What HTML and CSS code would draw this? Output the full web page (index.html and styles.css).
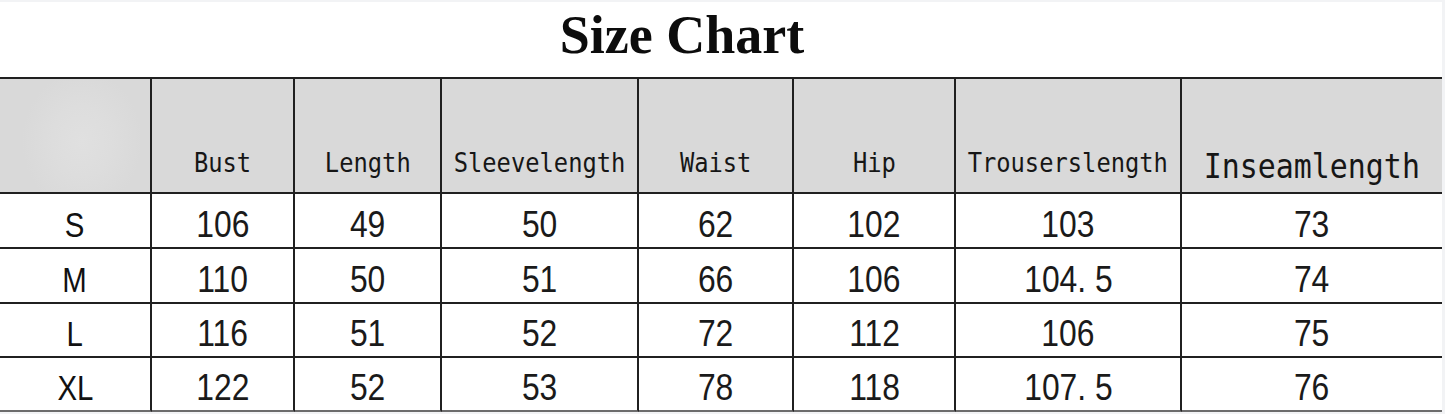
FILE: index.html
```html
<!DOCTYPE html>
<html>
<head>
<meta charset="utf-8">
<link rel="stylesheet" href="styles.css">
</head>
<body>
<div class="sheet">
  <div class="title">Size Chart</div>
  <div class="chart">
    <div class="cell head blank"></div>
    <div class="cell head"><span class="hl">Bust</span></div>
    <div class="cell head"><span class="hl">Length</span></div>
    <div class="cell head"><span class="hl">Sleevelength</span></div>
    <div class="cell head"><span class="hl">Waist</span></div>
    <div class="cell head"><span class="hl">Hip</span></div>
    <div class="cell head"><span class="hl">Trouserslength</span></div>
    <div class="cell head last"><span class="hl big">Inseamlength</span></div>

    <div class="cell"><span class="sz">S</span></div>
    <div class="cell"><span class="num">106</span></div>
    <div class="cell"><span class="num">49</span></div>
    <div class="cell"><span class="num">50</span></div>
    <div class="cell"><span class="num">62</span></div>
    <div class="cell"><span class="num">102</span></div>
    <div class="cell"><span class="num">103</span></div>
    <div class="cell last"><span class="num">73</span></div>

    <div class="cell"><span class="sz">M</span></div>
    <div class="cell"><span class="num">110</span></div>
    <div class="cell"><span class="num">50</span></div>
    <div class="cell"><span class="num">51</span></div>
    <div class="cell"><span class="num">66</span></div>
    <div class="cell"><span class="num">106</span></div>
    <div class="cell"><span class="num">104. 5</span></div>
    <div class="cell last"><span class="num">74</span></div>

    <div class="cell"><span class="sz">L</span></div>
    <div class="cell"><span class="num">116</span></div>
    <div class="cell"><span class="num">51</span></div>
    <div class="cell"><span class="num">52</span></div>
    <div class="cell"><span class="num">72</span></div>
    <div class="cell"><span class="num">112</span></div>
    <div class="cell"><span class="num">106</span></div>
    <div class="cell last"><span class="num">75</span></div>

    <div class="cell bottom"><span class="sz">XL</span></div>
    <div class="cell bottom"><span class="num">122</span></div>
    <div class="cell bottom"><span class="num">52</span></div>
    <div class="cell bottom"><span class="num">53</span></div>
    <div class="cell bottom"><span class="num">78</span></div>
    <div class="cell bottom"><span class="num">118</span></div>
    <div class="cell bottom"><span class="num">107. 5</span></div>
    <div class="cell bottom last"><span class="num">76</span></div>
  </div>
</div>
</body>
</html>
```

FILE: styles.css
```css
html, body {
  margin: 0;
  padding: 0;
  background: #f2f3f5;
}

.sheet {
  width: 1442px;
  height: 410px;
  margin-top: 2px;
  background: #ffffff;
  color: #161616;
}

.title {
  height: 66px;
  padding-bottom: 9px;
  padding-right: 78px;
  display: flex;
  align-items: center;
  justify-content: center;
  font-family: "Liberation Serif", "Times New Roman", serif;
  font-weight: bold;
  font-size: 54px;
  color: #0c0c0c;
}

.chart {
  display: grid;
  grid-template-columns: 152px 143px 147px 197px 155px 162px 226px 260px;
  grid-template-rows: 115px 55px 55px 54px 54px;
  border-top: 2px solid #202020;
}

.cell {
  box-sizing: border-box;
  border-right: 2px solid #202020;
  border-bottom: 2px solid #202020;
  display: flex;
  align-items: center;
  justify-content: center;
  padding-top: 8px;
  overflow: hidden;
}

.cell.last {
  border-right: none;
}

.cell.bottom {
  border-bottom-color: #6c6c6c;
}

.head {
  background: #d9d9d9;
  align-items: flex-end;
  padding-top: 0;
  padding-bottom: 14px;
}

.head.blank {
  background: radial-gradient(ellipse 60px 70px at 82px 62px, #e0e0e0 0%, #dddddd 50%, #d9d9d9 100%);
}

.hl {
  display: inline-block;
  font-family: "DejaVu Sans Mono", "Liberation Mono", monospace;
  font-size: 27px;
  line-height: 30px;
  transform: scaleX(0.88);
  white-space: nowrap;
  color: #161616;
}

.hl.big {
  font-size: 34px;
  line-height: 36px;
  margin-bottom: -6px;
}

.num {
  display: inline-block;
  font-family: "Liberation Sans", Arial, sans-serif;
  font-size: 37px;
  transform: scaleX(0.86);
  white-space: nowrap;
  color: #1a1a1a;
}

.sz {
  display: inline-block;
  font-family: "Liberation Sans", Arial, sans-serif;
  font-size: 35px;
  transform: scaleX(0.84);
  color: #111111;
}
```
